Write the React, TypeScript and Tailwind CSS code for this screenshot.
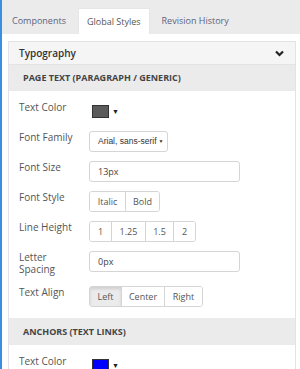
const font = { fontFamily: '"Open Sans", sans-serif' };

const Swatch = ({ color }: { color: string }) => (
  <div className="flex items-center h-[21px]">
    <div className="ml-[3px] w-[17px] h-[13px] border border-[#333]" style={{ backgroundColor: color }} />
    <span className="ml-[3px] text-[7px] text-[#222] leading-none">▼</span>
  </div>
);

const Label = ({ children }: { children: React.ReactNode }) => (
  <div className="w-[70px] shrink-0 text-[10px] leading-[12px] text-[#555]">{children}</div>
);

type Btn = { t: string; w: string };

const Group = ({ items, active }: { items: Btn[]; active?: number }) => (
  <div className="flex h-[21px] border border-[#d5d5d5] rounded-[3px] overflow-hidden">
    {items.map((b, i) => (
      <div
        key={b.t}
        className={
          "flex items-center justify-center text-[9px] text-[#555] " +
          b.w +
          " " +
          (i > 0 ? "border-l border-[#d5d5d5] " : "") +
          (i === active ? "bg-[#ebebeb] shadow-[inset_0_2px_3px_rgba(0,0,0,0.12)]" : "bg-white")
        }
      >
        {b.t}
      </div>
    ))}
  </div>
);

const Input = ({ value }: { value: string }) => (
  <div className="flex items-center w-[151px] h-[21px] border border-[#d5d5d5] rounded-[3px] px-[8px] text-[9px] text-[#444]">
    {value}
  </div>
);

export default function App() {
  return (
    <div className="w-[300px] h-[369px] overflow-hidden bg-white border-l-2 border-[#3b8fe0] relative" style={font}>
      <div className="flex h-[34px] bg-[#ebebeb] items-end">
        <div className="h-[26px] flex items-center pl-[10px] pr-[12px] text-[9px] text-[#5a6480]">Components</div>
        <div className="h-[26px] flex items-center px-[8px] bg-white text-[9px] text-[#555] border border-b-0 border-[#e6e6e6]">Global Styles</div>
        <div className="h-[26px] flex items-center px-[12px] text-[9px] text-[#5a6480]">Revision History</div>
      </div>
      <div className="mt-[7px] ml-[6px] w-[288px] border border-[#e3e3e3] border-b-0">
        <div className="flex items-center justify-between h-[23px] bg-[#f5f5f5] pl-[10px] pr-[11px] border-b border-[#e3e3e3]">
          <span className="text-[10px] font-semibold text-[#333]">Typography</span>
          <svg width="9" height="7" viewBox="0 0 9 7">
            <path d="M1 1.5 L4.5 5 L8 1.5" fill="none" stroke="#222" strokeWidth="2.2" />
          </svg>
        </div>
        <div className="flex items-center h-[26px] bg-[#ebebeb] pl-[14px] text-[9px] font-bold text-[#444]">
          PAGE TEXT (PARAGRAPH / GENERIC)
        </div>
        <div className="flex flex-col gap-[9px] pt-[10px] pb-[11px] pl-[10px]">
          <div className="flex">
            <Label>Text Color</Label>
            <Swatch color="#5b5b5b" />
          </div>
          <div className="flex">
            <Label>Font Family</Label>
            <div className="flex items-center h-[21px] border border-[#d5d5d5] rounded-[3px] pl-[8px] pr-[3px] text-[8.5px] text-[#333]" style={{ fontFamily: '"Liberation Sans", Arial, sans-serif' }}>
              Arial, sans-serif
              <span className="ml-[2px] text-[5px]">▼</span>
            </div>
          </div>
          <div className="flex">
            <Label>Font Size</Label>
            <Input value="13px" />
          </div>
          <div className="flex">
            <Label>Font Style</Label>
            <Group items={[{ t: "Italic", w: "w-[35px]" }, { t: "Bold", w: "w-[34px]" }]} />
          </div>
          <div className="flex">
            <Label>Line Height</Label>
            <Group
              items={[
                { t: "1", w: "w-[21px]" },
                { t: "1.25", w: "w-[34px]" },
                { t: "1.5", w: "w-[28px]" },
                { t: "2", w: "w-[22px]" },
              ]}
            />
          </div>
          <div className="flex h-[26px]">
            <Label>
              Letter
              <br />
              Spacing
            </Label>
            <Input value="0px" />
          </div>
          <div className="flex">
            <Label>Text Align</Label>
            <Group
              items={[
                { t: "Left", w: "w-[31px]" },
                { t: "Center", w: "w-[43px]" },
                { t: "Right", w: "w-[38px]" },
              ]}
              active={0}
            />
          </div>
        </div>
        <div className="flex items-center h-[27px] bg-[#ebebeb] pl-[14px] text-[9px] font-bold text-[#444]">
          ANCHORS (TEXT LINKS)
        </div>
        <div className="flex flex-col gap-[9px] pt-[10px] pl-[10px]">
          <div className="flex">
            <Label>Text Color</Label>
            <Swatch color="#0000ff" />
          </div>
        </div>
      </div>
    </div>
  );
}
